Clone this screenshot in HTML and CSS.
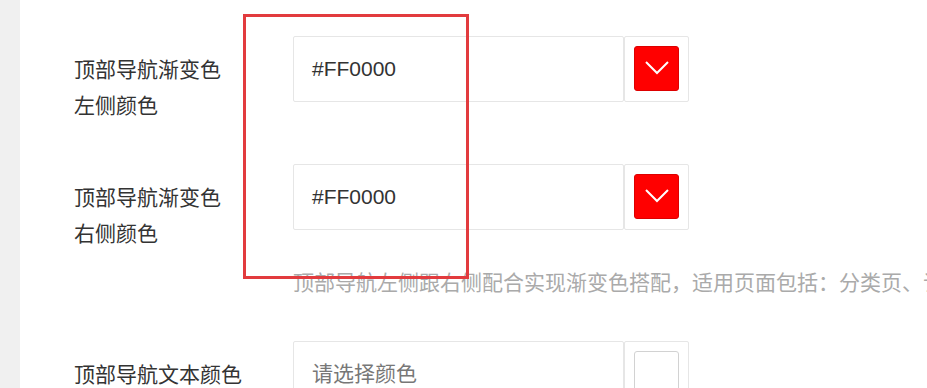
FILE: index.html
```html
<!DOCTYPE html>
<html lang="zh">
<head>
<meta charset="utf-8">
<title>颜色设置</title>
<link rel="stylesheet" href="styles.css">
</head>
<body>
<div class="page">
  <aside class="side"></aside>
  <main class="main">
    <div class="row">
      <div class="label">顶部导航渐变色<br>左侧颜色</div>
      <div class="field">
        <div class="group">
          <div class="input">#FF0000</div>
          <div class="picker">
            <span class="swatch red">
              <svg width="45" height="45" viewBox="0 0 45 45"><polyline points="12,16 23,27 34,16" fill="none" stroke="#fff" stroke-width="2"/></svg>
            </span>
          </div>
        </div>
      </div>
    </div>
    <div class="row">
      <div class="label">顶部导航渐变色<br>右侧颜色</div>
      <div class="field">
        <div class="group">
          <div class="input">#FF0000</div>
          <div class="picker">
            <span class="swatch red">
              <svg width="45" height="45" viewBox="0 0 45 45"><polyline points="12,16 23,27 34,16" fill="none" stroke="#fff" stroke-width="2"/></svg>
            </span>
          </div>
        </div>
        <div class="help">顶部导航左侧跟右侧配合实现渐变色搭配，适用页面包括：分类页、订</div>
      </div>
    </div>
    <div class="row">
      <div class="label">顶部导航文本颜色</div>
      <div class="field">
        <div class="group">
          <div class="input placeholder">请选择颜色</div>
          <div class="picker">
            <span class="swatch empty"></span>
          </div>
        </div>
      </div>
    </div>
    <div class="highlight"></div>
  </main>
</div>
</body>
</html>
```

FILE: styles.css
```css
html, body {
  margin: 0;
  padding: 0;
  background: #ffffff;
  overflow: hidden;
}
body {
  font-family: "Liberation Sans", "Noto Sans CJK SC", sans-serif;
  font-size: 21px;
  color: #333333;
}
.page {
  display: flex;
  height: 388px;
}
.side {
  width: 20px;
  flex: none;
  background: #f0f0f0;
}
.main {
  position: relative;
  flex: 1;
  min-width: 0;
  overflow: hidden;
  padding: 36px 0 0 54px;
}
.row {
  display: flex;
  align-items: flex-start;
  margin-bottom: 40px;
}
.label {
  width: 219px;
  flex: none;
  padding-top: 16px;
  line-height: 36px;
  color: #333333;
  white-space: nowrap;
}
.field {
  display: flex;
  flex-direction: column;
  min-width: 0;
}
.group {
  display: flex;
}
.input {
  box-sizing: border-box;
  width: 331px;
  height: 66px;
  border: 1px solid #e6e6e6;
  border-radius: 2px;
  padding-left: 18px;
  line-height: 64px;
  color: #333333;
}
.input.placeholder {
  color: #777777;
}
.picker {
  box-sizing: border-box;
  width: 65px;
  height: 66px;
  border: 1px solid #e6e6e6;
  border-radius: 2px;
  padding: 9px;
}
.swatch {
  box-sizing: border-box;
  display: block;
  width: 45px;
  height: 45px;
  border-radius: 3px;
}
.swatch svg {
  display: block;
}
.swatch.red {
  background: #ff0000;
  border: 1px solid #dd0000;
}
.swatch.red svg {
  margin: -1px;
}
.swatch.empty {
  background: #ffffff;
  border: 1px solid #d2d2d2;
}
.help {
  margin-top: 35px;
  line-height: 36px;
  color: #aaaaaa;
  white-space: nowrap;
}
.highlight {
  position: absolute;
  left: 223px;
  top: 14px;
  width: 226px;
  height: 265px;
  box-sizing: border-box;
  border: 3px solid #e23b3e;
}
```
